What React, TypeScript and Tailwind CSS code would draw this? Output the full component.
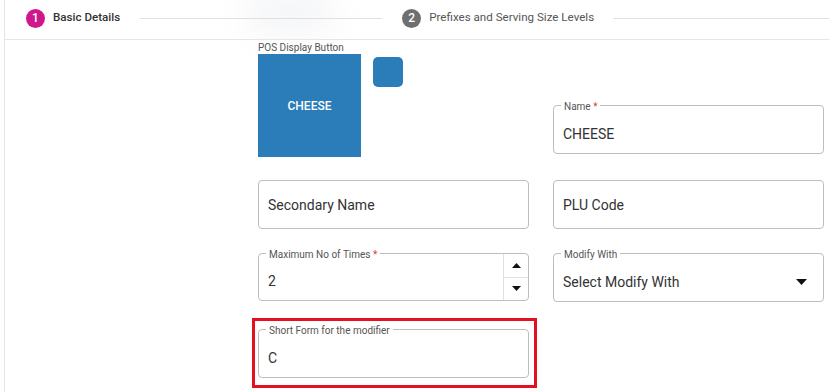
import React from "react";

function Field({ label, required, value, children, className = "" }: { label?: string; required?: boolean; value: string; children?: React.ReactNode; className?: string }) {
  return (
    <div className={`relative h-[49px] rounded-[4px] border border-[#bdbdbd] flex items-center ${label ? "pt-[9px]" : "pt-[1px]"} ${className}`}>
      {label && (
        <span className="absolute -top-[5px] left-[7px] bg-white px-[3px] text-[10px] leading-[12px] text-[#555]">
          {label}
          {required && <span className="text-[#e53935]"> *</span>}
        </span>
      )}
      <span className="flex-1 pl-[9px] text-[14px] text-[#333]">{value}</span>
      {children}
    </div>
  );
}

export default function App() {
  return (
    <div className="relative w-[829px] h-[392px] overflow-hidden bg-white" style={{ fontFamily: "Roboto, 'Liberation Sans', sans-serif" }}>
      <div className="pointer-events-none absolute left-[245px] -top-[8px] h-[42px] w-[90px] rounded-full bg-gray-200 opacity-40 blur-lg" />
      <div className="relative ml-[4px] h-full border-l border-[#e6e6e6]">
        <div className="flex h-[40px] items-center border-b border-[#e6e6e6] pb-[3px] pl-[21px]">
          <span className="flex h-[19px] w-[19px] items-center justify-center rounded-full bg-[#d0168c] text-[12px] font-medium text-white">1</span>
          <span className="ml-[8px] text-[11.6px] font-medium text-[#333]">Basic Details</span>
          <span className="mx-[20px] h-px w-[242px] bg-[#e0e0e0]" />
          <span className="flex h-[19px] w-[19px] items-center justify-center rounded-full bg-[#6f6f6f] text-[12px] font-medium text-white">2</span>
          <span className="ml-[8px] text-[11.6px] text-[#555]">Prefixes and Serving Size Levels</span>
          <span className="ml-[19px] h-px flex-1 bg-[#e0e0e0]" />
        </div>

        <div className="grid grid-cols-[271px_271px] gap-x-[24px] pl-[253px]">
          <div className="pt-[2px]">
            <div className="text-[10px] leading-[12px] text-[#555]">POS Display Button</div>
            <div className="flex items-start gap-[12px]">
              <div className="flex h-[103px] w-[103px] items-center justify-center bg-[#2a7db8] text-[12px] font-medium text-white">CHEESE</div>
              <div className="mt-[3px] h-[30px] w-[30px] rounded-[5px] bg-[#2a7db8]" />
            </div>
          </div>
          <div className="pt-[65px]">
            <Field label="Name" required value="CHEESE" />
          </div>

          <Field value="Secondary Name" className="mt-[23px]" />
          <Field value="PLU Code" className="mt-[23px]" />

          <Field label="Maximum No of Times" required value="2" className="mt-[24px] !h-[48px] pr-[25px]">
            <div className="absolute right-0 top-0 flex h-full w-[25px] flex-col border-l border-[#e0e0e0]">
              <div className="flex flex-1 items-center justify-center border-b border-[#e0e0e0]">
                <svg width="9" height="5" viewBox="0 0 9 5"><path d="M0 5 L4.5 0 L9 5 Z" fill="#111" /></svg>
              </div>
              <div className="flex flex-1 items-center justify-center">
                <svg width="9" height="5" viewBox="0 0 9 5"><path d="M0 0 L4.5 5 L9 0 Z" fill="#111" /></svg>
              </div>
            </div>
          </Field>
          <Field label="Modify With" value="Select Modify With" className="mt-[24px]">
            <svg className="mr-[16px]" width="11" height="6" viewBox="0 0 11 6"><path d="M0 0 L5.5 6 L11 0 Z" fill="#111" /></svg>
          </Field>

          <div className="mt-[16px] -ml-[6px] w-[285px] border-[3px] border-[#e5101f] pb-[7px] pl-[3px] pr-[5px] pt-[8px]">
            <Field label="Short Form for the modifier" value="C" />
          </div>
        </div>
      </div>
    </div>
  );
}
